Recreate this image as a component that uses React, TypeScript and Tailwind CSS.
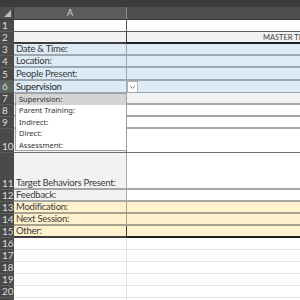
import { ChevronDown } from 'lucide-react'

type Row = {
  n: number
  h: string
  a?: string
  aBg: string
  bBg: string
  line: string
}

const rows: Row[] = [
  { n: 1, h: 'h-[12px]', aBg: 'bg-white', bBg: 'bg-white', line: 'border-b border-[#5a5a5a]' },
  { n: 2, h: 'h-[12px]', aBg: 'bg-[#f2f2f2]', bBg: 'bg-[#f2f2f2]', line: 'border-b-2 border-[#1e1e1e]' },
  { n: 3, h: 'h-[12px]', a: 'Date & Time:', aBg: 'bg-[#ddebf7]', bBg: 'bg-[#ddebf7]', line: 'border-b-2 border-[#9ea7b0]' },
  { n: 4, h: 'h-[12px]', a: 'Location:', aBg: 'bg-[#ddebf7]', bBg: 'bg-[#ddebf7]', line: 'border-b-2 border-[#9ea7b0]' },
  { n: 5, h: 'h-[13px]', a: 'People Present:', aBg: 'bg-[#ddebf7]', bBg: 'bg-[#ddebf7]', line: 'border-b-2 border-[#9ea7b0]' },
  { n: 6, h: 'h-[12px]', a: 'Supervision', aBg: 'bg-[#ddebf7]', bBg: 'bg-[#ddebf7]', line: 'border-b border-[#9ea7b0]' },
  { n: 7, h: 'h-[12px]', aBg: 'bg-[#f2f2f2]', bBg: 'bg-[#f2f2f2]', line: 'border-b-2 border-[#a6a6a6]' },
  { n: 8, h: 'h-[12px]', aBg: 'bg-white', bBg: 'bg-white', line: 'border-b-2 border-[#a6a6a6]' },
  { n: 9, h: 'h-[12px]', aBg: 'bg-white', bBg: 'bg-white', line: 'border-b-2 border-[#a6a6a6]' },
  { n: 10, h: 'h-[24px]', aBg: 'bg-[#f2f2f2]', bBg: 'bg-white', line: 'border-b border-[#6e6e6e]' },
  { n: 11, h: 'h-[37px]', a: 'Target Behaviors Present:', aBg: 'bg-[#f2f2f2]', bBg: 'bg-white', line: 'border-b-2 border-[#a6a6a6]' },
  { n: 12, h: 'h-[12px]', a: 'Feedback:', aBg: 'bg-[#f2f2f2]', bBg: 'bg-white', line: 'border-b-2 border-[#a6a6a6]' },
  { n: 13, h: 'h-[12px]', a: 'Modification:', aBg: 'bg-[#fff2cc]', bBg: 'bg-[#fff2cc]', line: 'border-b-2 border-[#a8a290]' },
  { n: 14, h: 'h-[12px]', a: 'Next Session:', aBg: 'bg-[#fff2cc]', bBg: 'bg-[#fff2cc]', line: 'border-b-2 border-[#a8a290]' },
  { n: 15, h: 'h-[12px]', a: 'Other:', aBg: 'bg-[#fff2cc]', bBg: 'bg-[#fff2cc]', line: 'border-b-2 border-[#1e1e1e]' },
  { n: 16, h: 'h-[12px]', aBg: 'bg-white', bBg: 'bg-white', line: 'border-b border-[#e3e3e3]' },
  { n: 17, h: 'h-[12px]', aBg: 'bg-white', bBg: 'bg-white', line: 'border-b border-[#e3e3e3]' },
  { n: 18, h: 'h-[12px]', aBg: 'bg-white', bBg: 'bg-white', line: 'border-b border-[#e3e3e3]' },
  { n: 19, h: 'h-[12px]', aBg: 'bg-white', bBg: 'bg-white', line: 'border-b border-[#e3e3e3]' },
  { n: 20, h: 'h-[12px]', aBg: 'bg-white', bBg: 'bg-white', line: 'border-b border-[#e3e3e3]' },
  { n: 21, h: 'h-[12px]', aBg: 'bg-white', bBg: 'bg-white', line: 'border-b border-[#e3e3e3]' },
]

const options = ['Supervision:', 'Parent Training:', 'Indirect:', 'Direct:', 'Assessment:']

export default function App() {
  return (
    <div className="relative w-[300px] h-[300px] overflow-hidden bg-white font-['Lato',sans-serif] text-[#3a3a3a]">
      <div className="h-[7px] bg-[#3c3c3c]" />

      {/* column headers */}
      <div className="flex h-[13px] bg-[#4e4e4e] border-b border-[#3a3a3a]">
        <div className="relative w-[14px] border-r border-[#3a3a3a]">
          <div className="absolute right-[2px] bottom-[2px] w-0 h-0 border-l-[7px] border-l-transparent border-b-[7px] border-b-[#bdbdbd]" />
        </div>
        <div className="w-[113px] flex items-center justify-center bg-[#5a5d5a] border-r border-[#8a8a8a] text-[9px] leading-[10px] text-[#d8d8d8]">
          A
        </div>
        <div className="flex-1" />
      </div>

      {rows.map((r) => (
        <div key={r.n} className={`flex ${r.h}`}>
          <div
            className={`w-[14px] shrink-0 flex items-end pl-[2px] border-b border-[#5c5c5c] text-[10px] leading-[11px] text-[#dcdcdc] ${
              r.n === 6 ? 'bg-[#5b6259]' : 'bg-[#4a4a4a]'
            }`}
          >
            {r.n}
          </div>
          <div
            className={`w-[113px] shrink-0 flex items-end pl-[2px] border-r border-[#3d3d3d] text-[9.5px] leading-[10px] tracking-[-0.25px] whitespace-nowrap overflow-hidden ${r.aBg} ${r.line} ${
              r.n === 6 ? 'text-[#222]' : ''
            }`}
          >
            {r.a}
          </div>
          <div className={`relative flex-1 overflow-hidden ${r.bBg} ${r.line}`}>
            {r.n === 2 && (
              <span className="absolute left-[136px] bottom-0 text-[7.5px] leading-[9px] whitespace-nowrap text-[#444]">
                MASTER TRACKING
              </span>
            )}
            {r.n === 6 && (
              <div className="absolute left-0 top-0 w-[11px] h-[12px] bg-white border border-[#b4b4b4] flex items-center justify-center">
                <ChevronDown size={7} strokeWidth={3} className="text-[#555]" />
              </div>
            )}
          </div>
        </div>
      ))}

      {/* data validation list */}
      <div className="absolute left-[15px] top-[93px] w-[112px] h-[58px] bg-white border border-[#a0a0a0] font-['Noto_Sans',sans-serif] text-[7.5px] leading-[11.4px] text-[#333]">
        {options.map((o, i) => (
          <div key={o} className={`pl-[3px] ${i === 0 ? 'bg-[#d4d4d4]' : ''}`}>
            {o}
          </div>
        ))}
      </div>
    </div>
  )
}
